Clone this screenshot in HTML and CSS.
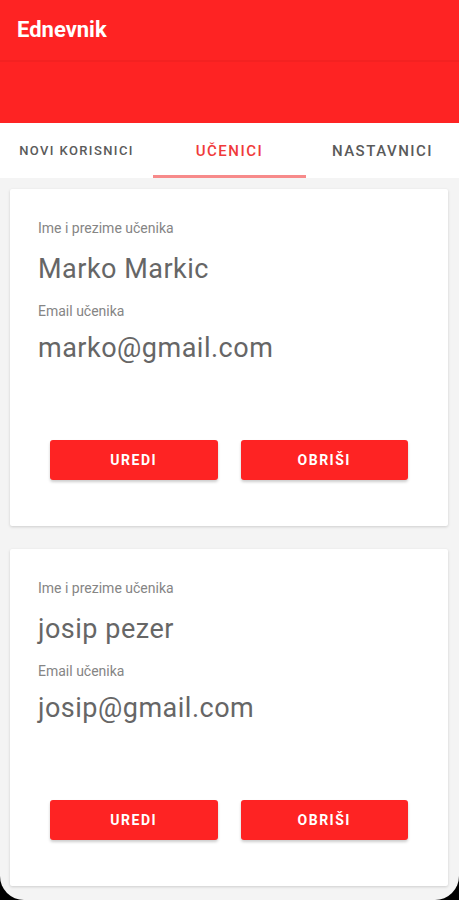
FILE: index.html
```html
<!DOCTYPE html>
<html lang="hr">
<head>
    <meta charset="UTF-8">
    <meta name="viewport" content="width=device-width, initial-scale=1.0">
    <title>Ednevnik</title>
    <link rel="stylesheet" href="styles.css">
</head>
<body>
    <div class="screen">
        <header class="appbar">
            <div class="toolbar">
                <h1 class="app-title">Ednevnik</h1>
            </div>
        </header>

        <nav class="tabs">
            <div class="tab small">NOVI KORISNICI</div>
            <div class="tab active">UČENICI</div>
            <div class="tab">NASTAVNICI</div>
        </nav>

        <main class="list">
            <div class="card">
                <p class="label">Ime i prezime učenika</p>
                <p class="value name">Marko Markic</p>
                <p class="label">Email učenika</p>
                <p class="value email">marko@gmail.com</p>
                <div class="actions">
                    <button class="btn">UREDI</button>
                    <button class="btn">OBRIŠI</button>
                </div>
            </div>

            <div class="card">
                <p class="label">Ime i prezime učenika</p>
                <p class="value name">josip pezer</p>
                <p class="label">Email učenika</p>
                <p class="value email">josip@gmail.com</p>
                <div class="actions">
                    <button class="btn">UREDI</button>
                    <button class="btn">OBRIŠI</button>
                </div>
            </div>
        </main>
    </div>
</body>
</html>
```

FILE: styles.css
```css
* {
    margin: 0;
    padding: 0;
    box-sizing: border-box;
}
body {
    font-family: Roboto, "Noto Sans", Arial, sans-serif;
    background: #000;
}
.screen {
    height: 900px;
    background: #f4f4f4;
    border-radius: 0 0 24px 24px;
    overflow: hidden;
}
.appbar {
    background: #fe2323;
    height: 123px;
}
.toolbar {
    height: 62px;
    padding-left: 17px;
    display: flex;
    align-items: center;
    border-bottom: 2px solid rgba(0, 0, 0, 0.04);
}
.app-title {
    color: white;
    font-size: 22px;
    font-weight: 700;
    margin-top: -2px;
}
.tabs {
    display: grid;
    grid-template-columns: repeat(3, 1fr);
    background: white;
    height: 55px;
}
.tab {
    display: flex;
    align-items: center;
    justify-content: center;
    font-size: 15px;
    font-weight: 500;
    letter-spacing: 1.5px;
    color: #5a5a5a;
    border-bottom: 3px solid transparent;
    padding-top: 3px;
}
.tab.small {
    font-size: 13px;
    letter-spacing: 1.4px;
}
.tab.active {
    color: #f03a3a;
    border-bottom-color: #f78a8a;
}
.list {
    padding: 11px 11px 0 10px;
    display: flex;
    flex-direction: column;
    gap: 23px;
}
.card {
    background: white;
    height: 337px;
    padding: 29px 28px 46px;
    display: flex;
    flex-direction: column;
    box-shadow: 0 1px 3px rgba(0, 0, 0, 0.16);
    border-radius: 2px;
}
.label {
    font-size: 14px;
    line-height: 20px;
    color: #858585;
}
.value {
    font-size: 27px;
    line-height: 32px;
    letter-spacing: 0.5px;
    color: #666;
}
.name {
    margin: 15px 0 16px;
}
.email {
    margin-top: 11px;
}
.actions {
    margin-top: auto;
    display: flex;
    gap: 23px;
    padding: 0 12px;
}
.btn {
    flex: 1;
    height: 40px;
    background: #fe2323;
    color: white;
    border: none;
    border-radius: 3px;
    font-family: Roboto, Arial, sans-serif;
    font-size: 14px;
    font-weight: 700;
    letter-spacing: 1.5px;
    box-shadow: 0 2px 3px rgba(0, 0, 0, 0.2);
}
```
